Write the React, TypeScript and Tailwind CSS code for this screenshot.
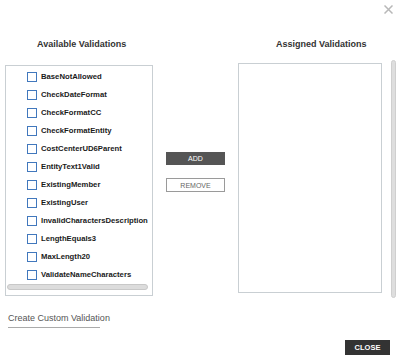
const available = [
  'BaseNotAllowed',
  'CheckDateFormat',
  'CheckFormatCC',
  'CheckFormatEntity',
  'CostCenterUD6Parent',
  'EntityText1Valid',
  'ExistingMember',
  'ExistingUser',
  'InvalidCharactersDescription',
  'LengthEquals3',
  'MaxLength20',
  'ValidateNameCharacters',
]

export default function App() {
  return (
    <div className="w-[400px] h-[359px] bg-white flex flex-col font-['Liberation_Sans',Arial,sans-serif] overflow-hidden">
      {/* Top bar with close X */}
      <div className="h-[36px] flex justify-end items-start pt-[5px] pr-[7px]">
        <svg width="9" height="9" viewBox="0 0 9 9" className="block">
          <path d="M0.5 0.5 L8.5 8.5 M8.5 0.5 L0.5 8.5" stroke="#b8b8b8" strokeWidth="1.5" />
        </svg>
      </div>

      {/* Main row */}
      <div className="h-[262px] flex items-start pl-[5px]">
        {/* Available */}
        <div className="w-[148px] flex flex-col">
          <div className="h-[16px] leading-[16px] text-[9px] font-bold text-[#333] pl-[32px]">
            Available Validations
          </div>
          <div className="mt-[13px] h-[231px] border border-[#c9cfd3] flex flex-col">
            <div className="pt-[2px] pl-[21px]">
              {available.map(name => (
                <div key={name} className="h-[18px] flex items-center gap-[4px]">
                  <span className="w-[10px] h-[10px] border-[1.5px] border-[#4178bd] bg-white flex-shrink-0" />
                  <span className="text-[7.7px] font-bold text-[#1a1a1a] whitespace-nowrap">{name}</span>
                </div>
              ))}
            </div>
            <div className="ml-[1px] mr-[4px] h-[6px] rounded-full bg-[#dcdcdc] border border-[#c8c8c8]" />
          </div>
        </div>

        {/* Buttons */}
        <div className="w-[85px] flex flex-col items-center pt-[116px] gap-[13px]">
          <button className="w-[59px] h-[13px] bg-[#555555] text-white text-[7px] leading-none flex items-center justify-center">
            ADD
          </button>
          <button className="w-[59px] h-[14px] bg-white border border-[#9a9a9a] text-[#666] text-[7px] leading-none flex items-center justify-center">
            REMOVE
          </button>
        </div>

        {/* Assigned */}
        <div className="w-[144px] flex flex-col">
          <div className="h-[16px] leading-[16px] text-[9px] font-bold text-[#333] pl-[38px] whitespace-nowrap">
            Assigned Validations
          </div>
          <div className="mt-[11px] h-[230px] border border-[#c9cfd3]" />
        </div>

        {/* Vertical scrollbar */}
        <div className="ml-[9px] mt-[24px] w-[5px] h-[238px] rounded-full bg-[#dedede] border border-[#cfcfcf]" />
      </div>

      {/* Footer */}
      <div className="pl-[8px] pt-[14px]">
        <div className="w-[92px] border-b-[1.5px] border-[#aaaaaa] pb-[3px] text-[9px] leading-[12px] text-[#555] whitespace-nowrap">
          Create Custom Validation
        </div>
      </div>
      <div className="flex justify-end pr-[10px] mt-[12px]">
        <button className="w-[45px] h-[15px] bg-[#333333] text-white text-[7.5px] font-bold leading-none flex items-center justify-center">
          CLOSE
        </button>
      </div>
    </div>
  )
}
